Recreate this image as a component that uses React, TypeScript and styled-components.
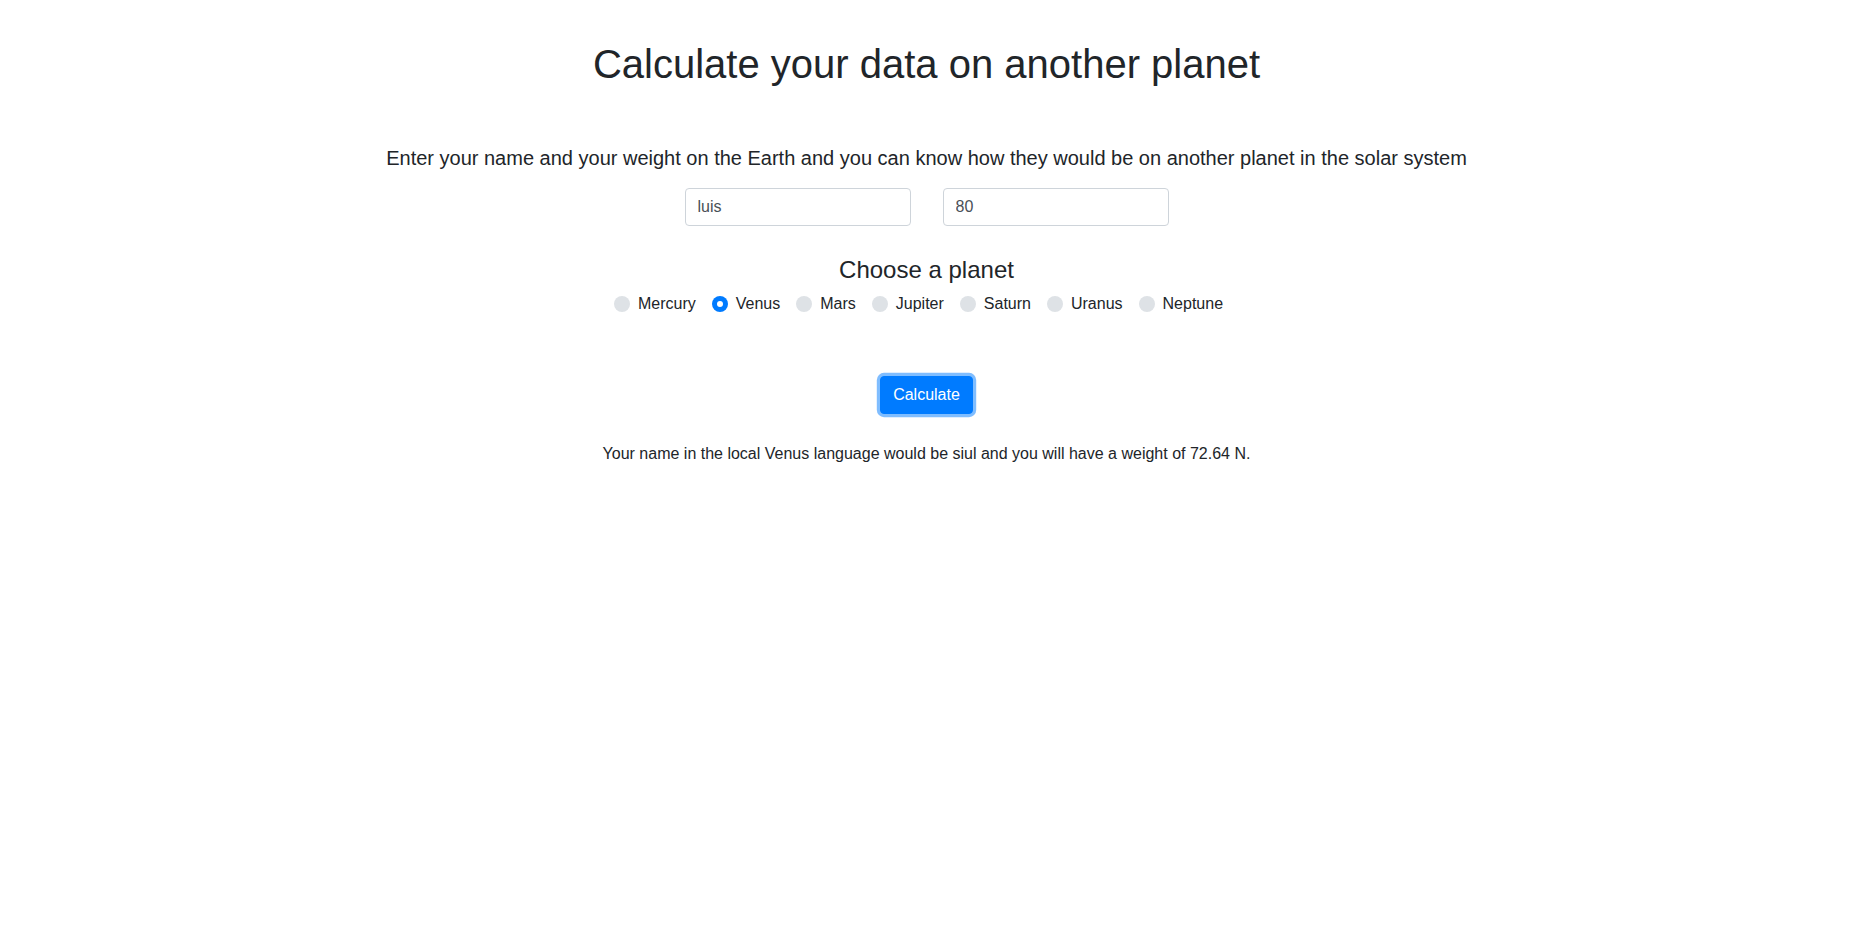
import React, { useState } from "react";
import styled, { createGlobalStyle } from "styled-components";

const GlobalStyle = createGlobalStyle`
  html, body { margin: 0; padding: 0; background: #fff; }
  body {
    font-family: "Liberation Sans", Arial, sans-serif;
    font-size: 16px;
    line-height: 1.5;
    color: #212529;
  }
  * { box-sizing: border-box; }
`;

const Page = styled.main`
  display: flex;
  flex-direction: column;
  align-items: center;
  padding-top: 40px;
`;

const Title = styled.h1`
  margin: 0;
  font-size: 40px;
  font-weight: 500;
  line-height: 1.2;
`;

const Lead = styled.p`
  margin: 55px 0 0;
  font-size: 20px;
  font-weight: 300;
  line-height: 1.5;
`;

const InputRow = styled.div`
  display: flex;
  gap: 32px;
  margin-top: 15px;
`;

const TextInput = styled.input`
  width: 226px;
  height: 38px;
  padding: 6px 12px;
  font-family: inherit;
  font-size: 16px;
  line-height: 1.5;
  color: #495057;
  background: #fff;
  border: 1px solid #ced4da;
  border-radius: 4px;
  outline: none;
`;

const SubTitle = styled.h4`
  margin: 30px 0 7px;
  font-size: 24px;
  font-weight: 500;
  line-height: 1.2;
`;

const RadioGroup = styled.div`
  display: flex;
`;

const RadioLabel = styled.label`
  display: inline-flex;
  align-items: center;
  gap: 8px;
  min-height: 24px;
  margin-right: 16px;
  cursor: pointer;
`;

const HiddenInput = styled.input`
  display: none;
`;

const Dot = styled.span<{ $checked: boolean }>`
  width: 16px;
  height: 16px;
  border-radius: 50%;
  background: ${(p) => (p.$checked ? "#007bff" : "#dee2e6")};
  display: inline-flex;
  align-items: center;
  justify-content: center;
  &::after {
    content: "";
    width: 6px;
    height: 6px;
    border-radius: 50%;
    background: ${(p) => (p.$checked ? "#fff" : "transparent")};
  }
`;

const Button = styled.button`
  margin-top: 60px;
  padding: 6px 12px;
  font-family: inherit;
  font-size: 16px;
  line-height: 1.5;
  color: #fff;
  background: #007bff;
  border: 1px solid #007bff;
  border-radius: 4px;
  box-shadow: 0 0 0 3.2px rgba(0, 123, 255, 0.5);
  cursor: pointer;
`;

const Result = styled.p`
  margin: 28px 0 0;
  font-size: 16px;
`;

const planets = ["Mercury", "Venus", "Mars", "Jupiter", "Saturn", "Uranus", "Neptune"];

export default function App() {
  const [planet, setPlanet] = useState("Venus");
  return (
    <>
      <GlobalStyle />
      <Page>
        <Title>Calculate your data on another planet</Title>
        <Lead>
          Enter your name and your weight on the Earth and you can know how they would be on another planet in the solar system
        </Lead>
        <InputRow>
          <TextInput defaultValue="luis" />
          <TextInput defaultValue="80" />
        </InputRow>
        <SubTitle>Choose a planet</SubTitle>
        <RadioGroup>
          {planets.map((p) => (
            <RadioLabel key={p}>
              <HiddenInput
                type="radio"
                name="planet"
                checked={planet === p}
                onChange={() => setPlanet(p)}
              />
              <Dot $checked={planet === p} />
              {p}
            </RadioLabel>
          ))}
        </RadioGroup>
        <Button>Calculate</Button>
        <Result>
          Your name in the local Venus language would be siul and you will have a weight of 72.64 N.
        </Result>
      </Page>
    </>
  );
}
